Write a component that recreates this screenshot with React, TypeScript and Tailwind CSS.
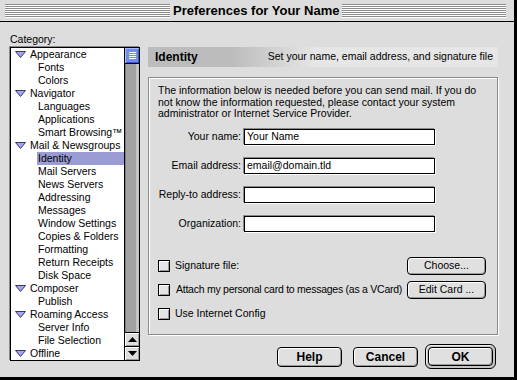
import type { ReactNode } from 'react';

const BODY = "font-['Liberation_Sans',Arial,sans-serif] text-[10.5px] text-black";

const TREE: { label: string; top?: boolean; selected?: boolean }[] = [
    { label: 'Appearance', top: true },
    { label: 'Fonts' },
    { label: 'Colors' },
    { label: 'Navigator', top: true },
    { label: 'Languages' },
    { label: 'Applications' },
    { label: 'Smart Browsing™' },
    { label: 'Mail & Newsgroups', top: true },
    { label: 'Identity', selected: true },
    { label: 'Mail Servers' },
    { label: 'News Servers' },
    { label: 'Addressing' },
    { label: 'Messages' },
    { label: 'Window Settings' },
    { label: 'Copies & Folders' },
    { label: 'Formatting' },
    { label: 'Return Receipts' },
    { label: 'Disk Space' },
    { label: 'Composer', top: true },
    { label: 'Publish' },
    { label: 'Roaming Access', top: true },
    { label: 'Server Info' },
    { label: 'File Selection' },
    { label: 'Offline', top: true },
];

const FIELDS = [
    { label: 'Your name:', value: 'Your Name' },
    { label: 'Email address:', value: 'email@domain.tld' },
    { label: 'Reply-to address:', value: '' },
    { label: 'Organization:', value: '' },
];

function Stripes({ className }: { className: string })
{
    return (
        <div className={`h-[14px] bg-[image:repeating-linear-gradient(to_bottom,#8c8c8c_0px,#8c8c8c_1px,#ffffff_1px,#ffffff_2px)] ${className}`} />
    );
}

function Triangle()
{
    return (
        <svg width="11" height="7" viewBox="0 0 11 7" className="shrink-0">
            <polygon points="0.5,0.5 10.5,0.5 5.5,6.5" fill="#a3a3f5" stroke="#3a3a5a" strokeWidth="1" />
        </svg>
    );
}

function MacButton({ children, bold, className = '' }: { children: ReactNode; bold?: boolean; className?: string })
{
    return (
        <div className={`flex items-center justify-center shrink-0 rounded-[4px] border border-black bg-[#e0e0e0] shadow-[inset_1px_1px_0_#ffffff,inset_-1px_-1px_0_#9a9a9a] ${bold ? "font-['Liberation_Sans',Arial,sans-serif] font-bold text-[12px]" : ''} ${className}`}>
            {children}
        </div>
    );
}

function Checkbox()
{
    return (
        <div className="w-[12px] h-[12px] shrink-0 border border-black bg-[#e4e4e4] shadow-[inset_1px_1px_0_#ffffff,inset_-1px_-1px_0_#9a9a9a]" />
    );
}

export default function App()
{
    return (
        <div className={`w-[517px] h-[380px] bg-[#dddddd] border-r-[3px] border-b-[3px] border-black flex flex-col ${BODY}`}>

            {/* ── Title bar ── */}
            <div className="h-[22px] shrink-0 flex items-center border-b border-black bg-[#dddddd]">
                <Stripes className="ml-[5px] w-[165px]" />
                <span className="mx-[3px] font-['Liberation_Sans',Arial,sans-serif] font-bold text-[13px] leading-none whitespace-nowrap">
                    Preferences for Your Name
                </span>
                <Stripes className="flex-1 mr-[8px]" />
            </div>

            <div className="flex-1 flex pt-[11px] pl-[10px]">

                {/* ── Category list ── */}
                <div className="w-[130px] flex flex-col">
                    <div className="h-[12px] leading-[12px] mb-[2px]">Category:</div>
                    <div className="h-[314px] border border-black bg-white flex shadow-[-1px_-1px_0_#8a8a8a]">
                        <div className="flex-1 overflow-hidden">
                            {TREE.map((item, i) => (
                                item.top ? (
                                    <div key={i} className="h-[13px] flex items-center pl-[4px] gap-[4px] whitespace-nowrap">
                                        <Triangle />
                                        <span className="leading-[13px]">{item.label}</span>
                                    </div>
                                ) : (
                                    <div key={i} className="h-[13px] flex pl-[26px] whitespace-nowrap">
                                        <span className={`flex-1 pl-[1px] leading-[13px] ${item.selected ? 'bg-[#9c9cd4]' : ''}`}>{item.label}</span>
                                    </div>
                                )
                            ))}
                        </div>

                        {/* scrollbar */}
                        <div className="w-[15px] border-l border-black flex flex-col">
                            <div className="h-[16px] border-b border-black bg-[#6f8cf0] shadow-[inset_1px_1px_0_#a9bcff,inset_-1px_-1px_0_#3c58b8] flex flex-col items-center justify-center gap-[1px]">
                                <div className="w-[7px] h-[1px] bg-white" />
                                <div className="w-[7px] h-[1px] bg-white" />
                                <div className="w-[7px] h-[1px] bg-white" />
                                <div className="w-[7px] h-[1px] bg-white" />
                            </div>
                            <div className="flex-1 bg-[linear-gradient(to_right,#7e7e7e_0px,#7e7e7e_1px,#a2a2a2_1px,#a2a2a2_11px,#c4c4c4_11px)]" />
                            <div className="h-[14px] border-t border-black bg-[#dddddd] shadow-[inset_1px_1px_0_#ffffff,inset_-1px_-1px_0_#999999] flex items-center justify-center">
                                <svg width="9" height="5" viewBox="0 0 9 5"><polygon points="4.5,0 9,5 0,5" fill="#000" /></svg>
                            </div>
                            <div className="h-[14px] border-t border-black bg-[#dddddd] shadow-[inset_1px_1px_0_#ffffff,inset_-1px_-1px_0_#999999] flex items-center justify-center">
                                <svg width="9" height="5" viewBox="0 0 9 5"><polygon points="0,0 9,0 4.5,5" fill="#000" /></svg>
                            </div>
                        </div>
                    </div>
                </div>

                {/* ── Right panel ── */}
                <div className="w-[350px] ml-[8px] pt-[14px] flex flex-col">
                    <div className="h-[20px] flex items-center justify-between pl-[7px] pr-[5px] bg-[linear-gradient(to_right,#bcbcbc_0%,#bcbcbc_24%,#e6e6e6_48%,#e6e6e6_100%)]">
                        <span className="font-bold text-[12px]">Identity</span>
                        <span>Set your name, email address, and signature file</span>
                    </div>

                    <div className="mt-[10px] h-[258px] border border-[#8a8a8a] shadow-[inset_1px_1px_0_#ffffff,1px_1px_0_#ffffff] pt-[7px] pl-[9px] pr-[11px] flex flex-col">
                        <p className="leading-[11.5px]">
                            The information below is needed before you can send mail. If you do<br />
                            not know the information requested, please contact your system<br />
                            administrator or Internet Service Provider.
                        </p>

                        <div className="mt-[9px] flex flex-col gap-[13px]">
                            {FIELDS.map(f => (
                                <div key={f.label} className="flex items-center">
                                    <span className="w-[83px] text-right whitespace-nowrap">{f.label}</span>
                                    <div className="ml-[3px] w-[191px] h-[16px] border border-black bg-white shadow-[-1px_-1px_0_#8a8a8a,1px_1px_0_#ffffff] flex items-center pl-[2px]">
                                        {f.value}
                                    </div>
                                </div>
                            ))}
                        </div>

                        <div className="mt-[25px] flex flex-col gap-[6px]">
                            <div className="h-[18px] flex items-center">
                                <Checkbox />
                                <span className="ml-[5px] flex-1 whitespace-nowrap">Signature file:</span>
                                <MacButton className="w-[79px] h-[18px]">Choose...</MacButton>
                            </div>
                            <div className="h-[18px] flex items-center">
                                <Checkbox />
                                <span className="ml-[6px] flex-1 min-w-0 whitespace-nowrap tracking-[-0.25px]">Attach my personal card to messages (as a VCard)</span>
                                <MacButton className="w-[79px] h-[18px]">Edit Card ...</MacButton>
                            </div>
                            <div className="h-[18px] flex items-center">
                                <Checkbox />
                                <span className="ml-[5px] whitespace-nowrap">Use Internet Config</span>
                            </div>
                        </div>
                    </div>

                    {/* ── Dialog buttons ── */}
                    <div className="mt-[9px] flex items-center justify-end pr-[2px]">
                        <MacButton bold className="w-[65px] h-[20px]">Help</MacButton>
                        <MacButton bold className="ml-[11px] w-[65px] h-[20px]">Cancel</MacButton>
                        <div className="ml-[7px] w-[71px] h-[25px] rounded-[6px] border border-black bg-[#c4c4c4] p-[2px] shadow-[inset_1px_1px_0_#eeeeee]">
                            <MacButton bold className="w-full h-full">OK</MacButton>
                        </div>
                    </div>
                </div>
            </div>
        </div>
    );
}
